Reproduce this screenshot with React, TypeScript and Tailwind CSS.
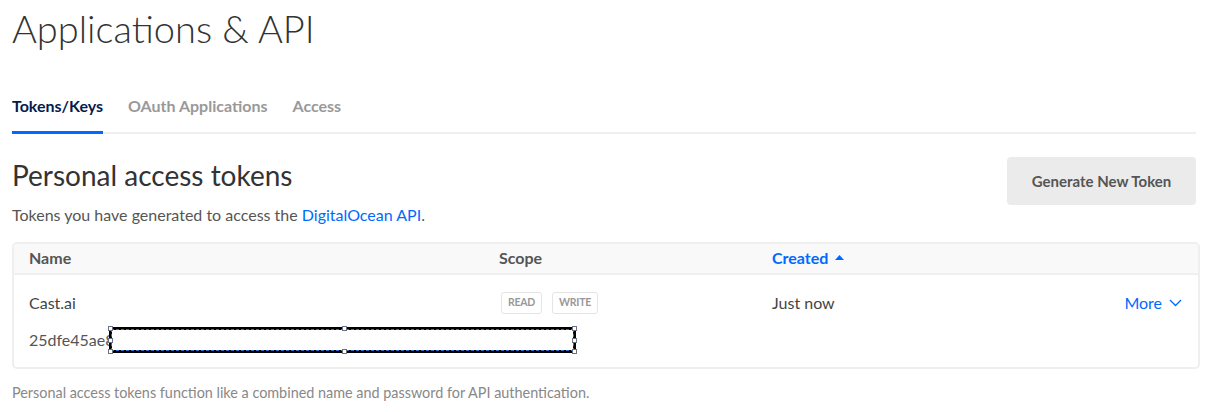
const font = { fontFamily: 'Lato, "Open Sans", sans-serif' }

function Tabs() {
  const tabs = ['Tokens/Keys', 'OAuth Applications', 'Access']
  return (
    <div className="flex flex-row gap-[25px] border-b-2 border-[#efefef] mr-[11px]">
      {tabs.map((t, i) => (
        <div
          key={t}
          className={
            i === 0
              ? 'pb-[13px] -mb-[2px] border-b-[3px] border-[#0069ff] text-[16px] font-bold text-[#031b4e]'
              : 'pb-[13px] -mb-[2px] border-b-[3px] border-transparent text-[16px] font-bold text-[#999]'
          }
        >
          {t}
        </div>
      ))}
    </div>
  )
}

function Badge({ label }: { label: string }) {
  return (
    <span className="inline-flex items-center h-[22px] px-[6px] border border-[#e5e5e5] rounded-[3px] text-[10.5px] font-bold text-[#999] tracking-tight">
      {label}
    </span>
  )
}

function Handle({ className }: { className: string }) {
  return <span className={'absolute w-[5px] h-[5px] bg-white border border-gray-500 ' + className} />
}

function Redacted() {
  return (
    <span className="relative inline-block align-middle w-[467px] h-[26px] border-[3px] border-black bg-white outline-1 outline-dashed outline-[#2a6fd6] -outline-offset-[3px]">
      <Handle className="-left-[4px] -top-[4px]" />
      <Handle className="-left-[4px] top-[8px]" />
      <Handle className="-left-[4px] -bottom-[4px]" />
      <Handle className="-right-[4px] -top-[4px]" />
      <Handle className="-right-[4px] top-[8px]" />
      <Handle className="-right-[4px] -bottom-[4px]" />
      <Handle className="left-[230px] -top-[4px]" />
      <Handle className="left-[230px] -bottom-[4px]" />
    </span>
  )
}

function TokenTable() {
  return (
    <div className="mr-[7px] border-2 border-[#efefef] rounded-[5px] overflow-hidden">
      <div className="grid grid-cols-[470px_273px_1fr] items-center h-[31px] pb-[2px] bg-[#f9f9f9] border-b-2 border-[#efefef] px-[15px] text-[16px] font-bold text-[#555]">
        <div>Name</div>
        <div>Scope</div>
        <div className="flex flex-row items-center gap-[7px] text-[#0069ff]">
          Created
          <svg width="9" height="5" viewBox="0 0 9 5">
            <path d="M0 5 L4.5 0 L9 5 Z" fill="#0069ff" />
          </svg>
        </div>
      </div>
      <div className="px-[15px] pt-[16px] pb-[14px]">
        <div className="grid grid-cols-[472px_271px_1fr] items-center h-[24px] text-[16px] text-[#444]">
          <div>Cast.ai</div>
          <div className="flex flex-row gap-[10px]">
            <Badge label="READ" />
            <Badge label="WRITE" />
          </div>
          <div className="flex flex-row items-center justify-between">
            <span>Just now</span>
            <span className="flex flex-row items-center gap-[7px] text-[#0069ff] mr-[1px]">
              More
              <svg width="13" height="8" viewBox="0 0 13 8" fill="none">
                <path d="M1 1 L6.5 6.5 L12 1" stroke="#0069ff" strokeWidth="1.3" />
              </svg>
            </span>
          </div>
        </div>
        <div className="mt-[12px] flex flex-row items-center text-[16px] text-[#555]">
          <span>25dfe45ae8</span>
          <span className="-ml-[6px] flex">
            <Redacted />
          </span>
        </div>
      </div>
    </div>
  )
}

export default function App() {
  return (
    <div className="bg-white w-[1207px] h-[412px] pl-3 pt-[5px] overflow-hidden" style={font}>
      <h1 className="text-[38px] font-light text-[#333] leading-[46px]">Applications &amp; API</h1>
      <div className="mt-[43px]">
        <Tabs />
      </div>
      <div className="flex flex-row justify-between items-start mt-[23px] mr-[11px]">
        <div>
          <h2 className="text-[28px] font-normal text-[#333] leading-[32px] mt-[2px]">Personal access tokens</h2>
          <p className="mt-[12px] text-[16px] leading-[24px] text-[#555]">
            Tokens you have generated to access the <span className="text-[#0069ff]">DigitalOcean API</span>.
          </p>
        </div>
        <button className="w-[189px] h-[48px] bg-[#ebebeb] rounded-[4px] text-[15px] font-bold text-[#555]">
          Generate New Token
        </button>
      </div>
      <div className="mt-[15px]">
        <TokenTable />
      </div>
      <p className="mt-[13px] text-[14.4px] text-[#888]">
        Personal access tokens function like a combined name and password for API authentication.
      </p>
    </div>
  )
}
